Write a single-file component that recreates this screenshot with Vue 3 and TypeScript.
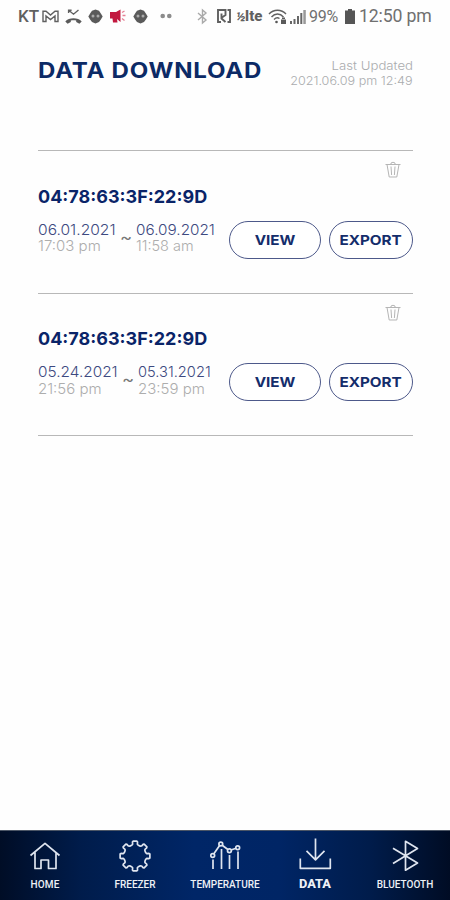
<script setup lang="ts">
interface Stamp { date: string; time: string; size: string }
interface RecordItem { id: number; mac: string; from: Stamp; to: Stamp }

const records: RecordItem[] = [
  {
    id: 1,
    mac: '04:78:63:3F:22:9D',
    from: { date: '06.01.2021', time: '17:03 pm', size: 'a' },
    to: { date: '06.09.2021', time: '11:58 am', size: 'b' },
  },
  {
    id: 2,
    mac: '04:78:63:3F:22:9D',
    from: { date: '05.24.2021', time: '21:56 pm', size: 'c' },
    to: { date: '05.31.2021', time: '23:59 pm', size: 'd' },
  },
]

// Outline of an eight-toothed gear centred on (16, 16)
const gearPath: string = (() => {
  const pts: string[] = []
  for (let i = 0; i < 8; i++) {
    const base = (i * Math.PI) / 4
    const steps: [number, number][] = [[-0.3, 11.2], [-0.2, 12], [-0.18, 14.2], [-0.13, 15], [0.13, 15], [0.18, 14.2], [0.2, 12], [0.3, 11.2]]
    for (const [offset, radius] of steps) {
      const x = 16 + radius * Math.sin(base + offset)
      const y = 16 - radius * Math.cos(base + offset)
      pts.push(`${x.toFixed(2)} ${y.toFixed(2)}`)
    }
  }
  return `M${pts.join('L')}Z`
})()
</script>

<template>
  <div class="screen">
    <header class="status">
      <div class="status-left">
        <span class="carrier">KT</span>
        <svg class="s-mail" width="17" height="13" viewBox="0 0 17 13"><path d="M4 1.200H1v10.300h3V6l4.500 3.500L13 6v5.500h3V1.200h-3L8.500 5z" /></svg>
        <svg class="s-missed" width="17" height="15" viewBox="0 0 17 15"><path d="M4 1.500l4.500 3.700L13.500 1M3.600 4V1.200h3" /><path class="solid" d="M.3 12.500c3.500-4.200 12.900-4.200 16.400 0l-2.300 2.200-3.200-1.700v-1.500c-1.800-.5-3.600-.5-5.400 0v1.500l-3.200 1.700z" /></svg>
        <svg class="s-face1" width="15" height="15" viewBox="0 0 15 15"><path class="blob" d="M7.500.5l3.500 1.300 1.700 2.500 2 3.200-2 3.200-1.700 2.300-3.500 1.500L4 13l-1.700-2.300-2-3.200 2-3.200L4 1.800z" /><circle cx="5" cy="7" r="1.500" /><circle cx="10" cy="7" r="1.500" /></svg>
        <svg class="s-horn" width="17" height="14" viewBox="0 0 17 14"><path d="M0 3h6l4.500-2.500v12.500L7 10l.5 3.500H3L2.500 9.500H0z" /><path class="rays" d="M12 3.500l2.500-1.500M12.500 6.500h3M12 9.500l2.500 2" /></svg>
        <svg class="s-face2" width="15" height="15" viewBox="0 0 15 15"><path class="blob" d="M7.500.5l3.500 1.300 1.700 2.500 2 3.200-2 3.200-1.700 2.300-3.500 1.500L4 13l-1.700-2.300-2-3.200 2-3.200L4 1.800z" /><circle cx="5" cy="7" r="1.500" /><circle cx="10" cy="7" r="1.500" /></svg>
        <svg class="s-dots" width="12" height="6" viewBox="0 0 12 6"><circle cx="2.700" cy="3" r="2.300" /><circle cx="9.300" cy="3" r="2.300" /></svg>
      </div>
      <div class="status-right">
        <svg class="s-bt" width="11" height="15" viewBox="0 0 11 15"><path d="M1 4l8 7-3.500 3V1L9 4l-8 7" /></svg>
        <svg class="s-nfc" width="14" height="14" viewBox="0 0 14 14"><path d="M4 13H1V1h7.500v5L5 8.500M4.500 4.500v5l4 3.500M10.500 1H13v12h-2.500" /></svg>
        <span class="lte"><i>½</i>lte</span>
        <svg class="s-wifi" width="19" height="15" viewBox="0 0 19 15"><path d="M1 5c4.500-5 12.500-5 17 0M3.500 8c3.500-4 8.500-4 12 0M6 10.500c2-2 4-2 5.500-1" /><circle cx="8.500" cy="13" r="1.300" /><path class="lock" d="M13 10.500h5V15h-5zM14 10v-1.500h3V10" /></svg>
        <svg class="s-signal" width="16" height="15" viewBox="0 0 16 15"><path d="M0 12h2v3H0zM3.500 10h2v5h-2zM7 7h2v8H7zM10.300 4h2v11h-2z" /><path class="dim" d="M13.300 1h2.500v14h-2.500z" /></svg>
        <span class="percent">99%</span>
        <svg class="s-battery" width="10" height="15" viewBox="0 0 10 15"><path d="M3 0h4v1.500h3V15H0V1.500h3z" /></svg>
        <span class="clock">12:50 pm</span>
      </div>
    </header>

    <main class="content">
      <section class="heading">
        <h1>DATA DOWNLOAD</h1>
        <p class="updated"><span class="u1">Last Updated</span><span class="u2">2021.06.09 pm 12:49</span></p>
      </section>

      <article v-for="item in records" :key="item.id" class="record">
        <svg class="trash" width="16" height="17" viewBox="0 0 16 17"><path d="M.5 3.500h15M6 3.300V2q2-1.500 4 0v1.300M2 3.500L4.200 16h7.600L14 3.500M6 5.500l.6 8.500M10 5.500l-.6 8.500" /></svg>
        <h2>{{ item.mac }}</h2>
        <div class="row">
          <div class="stamp" :class="item.from.size"><span class="date">{{ item.from.date }}</span><span class="time">{{ item.from.time }}</span></div>
          <span class="tilde">~</span>
          <div class="stamp" :class="item.to.size"><span class="date">{{ item.to.date }}</span><span class="time">{{ item.to.time }}</span></div>
          <div class="actions">
            <button class="view" type="button"><span>VIEW</span></button>
            <button class="export" type="button"><span>EXPORT</span></button>
          </div>
        </div>
      </article>
    </main>

    <nav class="tabs">
      <a class="tab">
        <svg width="32" height="32" viewBox="0 0 32 32"><path d="M1.500 15.500L16 3.300 30.500 15.500M6 12.500v16h6v-8.500h7.500v8.500H27V12.500" /></svg>
        <span class="home">HOME</span>
      </a>
      <a class="tab">
        <svg width="32" height="32" viewBox="0 0 32 32"><path :d="gearPath" /></svg>
        <span class="freezer">FREEZER</span>
      </a>
      <a class="tab">
        <svg width="32" height="32" viewBox="0 0 32 32"><path d="M4 19.500V29M12.500 9v20M20.500 15v14M29 11.500V29M4.700 14L10.600 5.600M13.200 5.300l5.700 4.200M22 10l5-1.700" /><circle cx="3.700" cy="15.500" r="1.900" /><circle cx="11.800" cy="4" r="1.900" /><circle cx="20.400" cy="10.700" r="1.900" /><circle cx="28.700" cy="7.700" r="1.900" /></svg>
        <span class="temperature">TEMPERATURE</span>
      </a>
      <a class="tab active">
        <svg width="32" height="32" viewBox="0 0 32 32"><path d="M16.500-1.500v21M7.500 10.800l9 9 9-9M1.300 18.500v9.800h30v-9.800" /></svg>
        <span class="data">DATA</span>
      </a>
      <a class="tab">
        <svg width="32" height="32" viewBox="0 0 32 32"><path d="M4 8.300L28.500 23 16.500 30.200V1.300L28.500 8.500 4 23.500" /></svg>
        <span class="bluetooth">BLUETOOTH</span>
      </a>
    </nav>
  </div>
</template>

<style>
body { background: #fefefe; }
</style>

<style scoped>
.screen {
  width: 450px;
  height: 900px;
  display: flex;
  flex-direction: column;
  background: #fefefe;
  font-family: Inter, "Open Sans", sans-serif;
  overflow: hidden;
}
svg { display: block; flex: none; fill: none; overflow: visible; }
h1, h2, p { margin: 0; }
span { white-space: nowrap; }

.status {
  height: 32px;
  flex: none;
  display: flex;
  justify-content: space-between;
  padding: 0 19px 0 18px;
  font-family: Roboto, sans-serif;
  color: #707070;
}
.status-left, .status-right { display: flex; align-items: center; }
.status-left { color: #606060; }
.carrier { width: 24px; font-size: 17px; font-weight: 500; }
.status svg { stroke: #606060; stroke-width: 1.400; }
.s-missed { margin-left: 6px; }
.status .solid, .status .blob, .status .lock { fill: #5a5a5a; stroke: none; }
.s-face1 { margin-left: 6px; }
.s-face2 { margin-left: 6px; }
.status .s-face1 circle, .status .s-face2 circle { fill: #aaa; stroke: none; }
.s-horn { margin-left: 7px; }
.status .s-horn path { fill: #c2183f; stroke: none; }
.status .s-horn .rays { stroke: #e58095; stroke-width: 1.300; }
.s-dots { margin-left: 12px; }
.status .s-dots circle { fill: #8c8c8c; stroke: none; }
.status .s-bt { stroke: #aaa; }
.status .s-nfc { margin-left: 9px; stroke-width: 1.900; }
.lte { width: 29px; margin-left: 5px; font-size: 15px; font-weight: 800; color: #606060; }
.lte i { font-size: 13px; letter-spacing: -0.500px; }
.status .s-wifi { margin-left: 3px; }
.status .s-wifi circle { fill: #555; stroke: none; }
.s-signal { margin-left: 3px; }
.status .s-signal path { fill: #666; stroke: none; }
.status .s-signal .dim { fill: #999; }
.percent { width: 31px; margin-left: 3px; font-size: 16px; letter-spacing: -0.200px; }
.s-battery { margin-left: 5px; }
.status .s-battery path { fill: #555; stroke: none; }
.clock { width: 72px; margin-left: 4px; font-size: 17.700px; letter-spacing: -0.150px; }

.content { flex: 1; padding: 0 37px 0 38px; }
.heading {
  height: 118px;
  display: flex;
  justify-content: space-between;
  align-items: flex-start;
}
h1 {
  margin-top: 24px;
  font-size: 21.500px;
  line-height: 28px;
  font-weight: 650;
  letter-spacing: 0.700px;
  color: #0c2a66;
  white-space: nowrap;
  transform: scaleX(1.118);
  transform-origin: left;
}
.updated { display: flex; flex-direction: column; align-items: flex-end; margin-top: 26px; font-size: 12px; line-height: 15px; font-weight: 300; color: #aaacae; }
.updated span { transform-origin: right; }
.u1 { transform: scaleX(1.100); }
.u2 { transform: scaleX(1.050); }

.record {
  height: 142.500px;
  box-sizing: border-box;
  border-top: 1px solid #b8b8b8;
  display: flex;
  flex-direction: column;
}
.record:last-child { height: 143.500px; border-bottom: 1px solid #b8b8b8; }
.trash { align-self: flex-end; margin: 10px 12px 0 0; stroke: #b5b5b5; stroke-width: 1; }
h2 { margin-top: 7.800px; font-size: 18px; line-height: 22px; font-weight: 650; color: #0a2468; white-space: nowrap; }
.row { display: flex; align-items: flex-start; margin-top: 13px; }
.stamp { display: flex; flex-direction: column; align-items: flex-start; margin-top: 1px; font-weight: 300; font-size: 14.500px; line-height: 16.500px; }
.stamp span { transform-origin: left; }
.date { color: #3d4980; }
.time { color: #adadad; }
.stamp.a { width: 82px; }
.stamp.c { width: 84px; }
.a .date { transform: scaleX(1.075); }
.b .date { transform: scaleX(1.055); }
.c .date { transform: scaleX(1.060); }
.d .date { transform: scaleX(1.010); }
.a .time, .c .time, .d .time { transform: scaleX(1.035); }
.tilde { width: 16px; margin-top: 8px; font-size: 16px; line-height: 16px; color: #777; transform: scaleX(1.150); transform-origin: left; }
.actions { display: flex; gap: 8px; margin-left: auto; }
button {
  height: 38px;
  box-sizing: border-box;
  padding: 0;
  border: 1px solid #4d598a;
  border-radius: 19px;
  background: #fff;
  color: #142d6b;
  font: 650 13.500px Inter, sans-serif;
}
button span { display: inline-block; transform: scaleX(1.130); }
.view { width: 92px; }
.export { width: 84px; }

.tabs {
  height: 70px;
  flex: none;
  display: grid;
  grid-template-columns: repeat(5, 90px);
  box-sizing: border-box;
  border-top: 1px solid #4c5666;
  background: linear-gradient(90deg, #000d26 0%, #001c4b 18%, #002667 43%, #002565 62%, #001c4b 82%, #000c24 100%);
  color: #eef1f6;
  font-family: Roboto, sans-serif;
}
.tab { display: flex; flex-direction: column; align-items: center; padding-top: 9px; }
.tab svg { stroke: #dfe5ef; stroke-width: 1.700; stroke-linejoin: round; }
.tab span { margin-top: 5px; font-size: 10px; line-height: 16px; font-weight: 500; }
.tab .home { letter-spacing: 0.200px; }
.tab.active span { font-size: 12.800px; font-weight: 800; margin-top: 4px; }
</style>
